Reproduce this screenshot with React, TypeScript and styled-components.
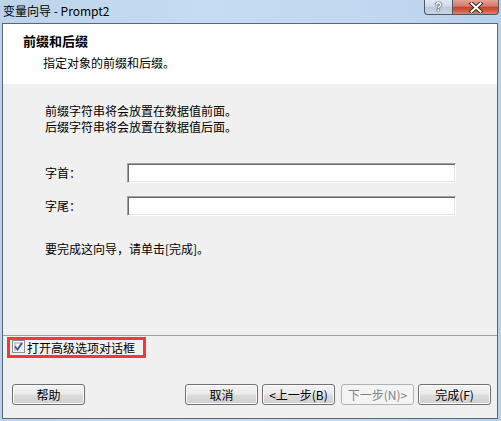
import React from "react";
import styled, { createGlobalStyle } from "styled-components";

const GlobalStyle = createGlobalStyle`
  html, body { margin: 0; padding: 0; }
  body { font-family: "Noto Sans CJK SC", "Noto Sans", sans-serif; font-size: 12px; color: #000; }
  * { box-sizing: border-box; }
`;

const Window = styled.div`
  width: 501px;
  height: 421px;
  display: flex;
  flex-direction: column;
  padding: 0 3px 2px 2px;
  background: linear-gradient(90deg, #bcd3ea 0%, #c6dcf2 40%, #c2d9f0 70%, #b7d0ea 100%);
`;

const TitleBar = styled.div`
  height: 23px;
  display: flex;
  align-items: flex-start;
`;

const TitleText = styled.div`
  margin-top: 3px;
  padding-left: 1px;
  font-size: 12px;
  line-height: 16px;
  color: #000;
  font-family: "Noto Sans CJK SC", "Noto Sans", sans-serif;
`;

const CaptionGroup = styled.div`
  margin-left: auto;
  margin-right: -1px;
  display: flex;
`;

const HelpCaption = styled.div`
  width: 28px;
  height: 15px;
  border: 1px solid #4b5868;
  border-top: none;
  border-right: none;
  border-radius: 0 0 0 4px;
  background: linear-gradient(#dfe8f2 0%, #cfdbe8 45%, #b9c9da 50%, #c9d6e4 100%);
  display: flex;
  align-items: center;
  justify-content: center;
  color: #fff;
  font-family: "Liberation Sans", sans-serif;
  font-weight: bold;
  font-size: 12px;
  line-height: 12px;
  text-shadow: 0 0 1px #2a3442, 0 0 1px #2a3442, 0 0 1px #2a3442;
`;

const CloseCaption = styled.div`
  width: 47px;
  height: 15px;
  border: 1px solid #4b5868;
  border-top: none;
  border-radius: 0 0 4px 0;
  background: linear-gradient(#e3a495 0%, #d5766a 45%, #c4412f 52%, #d5664f 85%, #e08a6a 100%);
  display: flex;
  align-items: center;
  justify-content: center;
`;

const Client = styled.div`
  flex: 1;
  display: flex;
  flex-direction: column;
  border: 1px solid #55687a;
  background: #f0f0f0;
`;

const Header = styled.div`
  height: 60px;
  background: #ffffff;
  padding: 9px 0 0 20px;
`;

const HeaderTitle = styled.div`
  font-size: 13px;
  font-weight: bold;
  line-height: 16px;
`;

const HeaderSub = styled.div`
  margin-top: 6px;
  padding-left: 20px;
  font-size: 12px;
  line-height: 16px;
`;

const Body = styled.div`
  flex: 1;
  padding: 19px 0 0 42px;
`;

const Line = styled.div`
  font-size: 12px;
  line-height: 16px;
`;

const Fields = styled.div`
  margin-top: 28px;
  display: flex;
  flex-direction: column;
  gap: 13px;
`;

const FieldRow = styled.div`
  display: flex;
  align-items: center;
  height: 20px;
`;

const FieldLabel = styled.label`
  width: 82px;
  font-size: 12px;
  line-height: 16px;
`;

const TextInput = styled.input`
  width: 329px;
  height: 20px;
  margin: 0;
  padding: 0 3px;
  font-family: inherit;
  font-size: 12px;
  background: #fff;
  border: 1px solid;
  border-color: #a0a0a0 #ffffff #ffffff #a0a0a0;
  box-shadow: inset 1px 1px 0 #696969, inset -1px -1px 0 #e3e3e3;
  outline: none;
`;

const FinishLine = styled(Line)`
  margin-top: 25px;
`;

const Separator = styled.div`
  height: 1px;
  background: #a0a0a0;
`;

const Footer = styled.div`
  height: 82px;
  display: flex;
  flex-direction: column;
  padding: 1px 6px 13px 4px;
`;

const HighlightBox = styled.div`
  width: 139px;
  height: 21px;
  border: 3px solid #ef3a3a;
  display: flex;
  align-items: center;
  padding-left: 2px;
`;

const CheckBox = styled.span`
  width: 13px;
  height: 13px;
  align-self: flex-start;
  border: 1px solid #8e8f8f;
  background: #f4f4f4;
  display: flex;
  align-items: center;
  justify-content: center;
  box-shadow: inset 0 0 0 1px #f4f4f4, inset 1px 1px 0 2px #c9cbcd, inset -1px -1px 0 2px #e8e9ea;
`;

const CheckLabel = styled.span`
  margin-left: 2px;
  font-size: 12px;
  line-height: 15px;
`;

const ButtonRow = styled.div`
  margin-top: 26px;
  padding-left: 5px;
  display: flex;
`;

const WinButton = styled.button<{ $gap?: number; $push?: boolean }>`
  width: 73px;
  height: 21px;
  margin: 0 0 0 ${(p) => (p.$push ? "auto" : `${p.$gap ?? 0}px`)};
  padding: 0;
  font-family: "Noto Sans CJK SC", "Noto Sans", sans-serif;
  font-size: 12px;
  line-height: 16px;
  color: #000;
  border: 1px solid #707070;
  border-radius: 3px;
  background: linear-gradient(#f2f2f2 0%, #ebebeb 48%, #dddddd 52%, #cfcfcf 100%);
  box-shadow: inset 0 0 0 1px #fbfbfb;
  &:disabled {
    color: #838383;
    border-color: #adb2b5;
    background: #f4f4f4;
    box-shadow: none;
  }
`;

export default function App() {
  return (
    <>
      <GlobalStyle />
      <Window>
        <TitleBar>
          <TitleText>变量向导 - Prompt2</TitleText>
          <CaptionGroup>
            <HelpCaption>?</HelpCaption>
            <CloseCaption>
              <svg width="14" height="11" viewBox="0 0 14 11">
                <path d="M2.5 1.5 L11.5 9.5 M11.5 1.5 L2.5 9.5" stroke="#3a2a28" strokeWidth="4" strokeLinecap="square" />
                <path d="M2.5 1.5 L11.5 9.5 M11.5 1.5 L2.5 9.5" stroke="#ffffff" strokeWidth="2" strokeLinecap="square" />
              </svg>
            </CloseCaption>
          </CaptionGroup>
        </TitleBar>
        <Client>
          <Header>
            <HeaderTitle>前缀和后缀</HeaderTitle>
            <HeaderSub>指定对象的前缀和后缀。</HeaderSub>
          </Header>
          <Body>
            <Line>前缀字符串将会放置在数据值前面。</Line>
            <Line>后缀字符串将会放置在数据值后面。</Line>
            <Fields>
              <FieldRow>
                <FieldLabel>字首：</FieldLabel>
                <TextInput type="text" />
              </FieldRow>
              <FieldRow>
                <FieldLabel>字尾：</FieldLabel>
                <TextInput type="text" />
              </FieldRow>
            </Fields>
            <FinishLine>要完成这向导，请单击[完成]。</FinishLine>
          </Body>
          <Separator />
          <Footer>
            <HighlightBox>
              <CheckBox>
                <svg width="9" height="9" viewBox="0 0 9 9">
                  <path d="M1 4.5 L3.5 7.5 L8 1" stroke="#3b4f9c" strokeWidth="1.8" fill="none" />
                </svg>
              </CheckBox>
              <CheckLabel>打开高级选项对话框</CheckLabel>
            </HighlightBox>
            <ButtonRow>
              <WinButton>帮助</WinButton>
              <WinButton $push>取消</WinButton>
              <WinButton $gap={4}>&lt;上一步(B)</WinButton>
              <WinButton $gap={6} disabled>下一步(N)&gt;</WinButton>
              <WinButton $gap={4}>完成(F)</WinButton>
            </ButtonRow>
          </Footer>
        </Client>
      </Window>
    </>
  );
}
